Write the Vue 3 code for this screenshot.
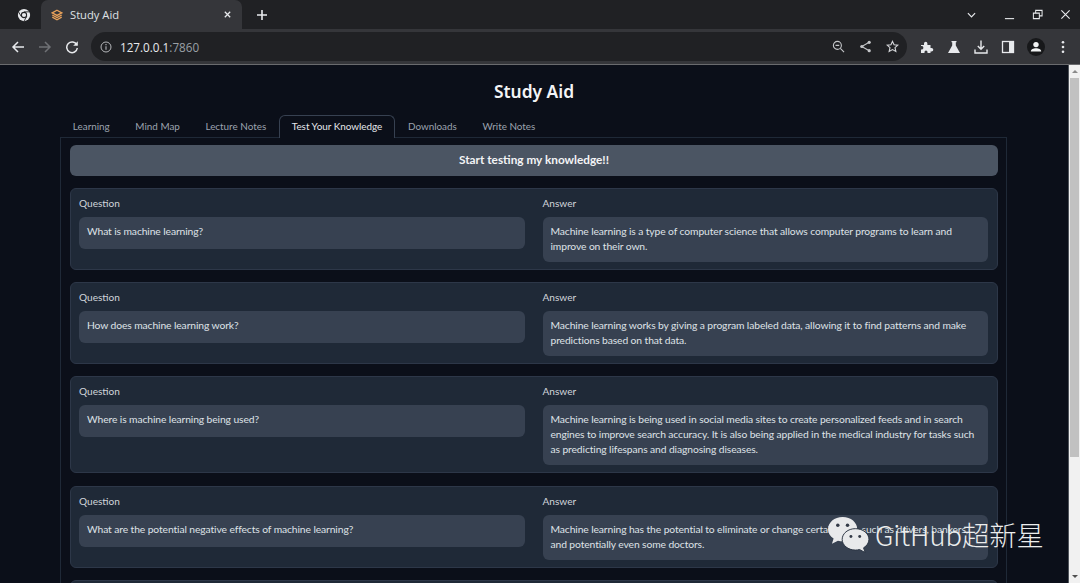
<script setup>
const tabs = ['Learning', 'Mind Map', 'Lecture Notes', 'Test Your Knowledge', 'Downloads', 'Write Notes']
const cards = [
  { q: 'What is machine learning?', a: ['Machine learning is a type of computer science that allows computer programs to learn and', 'improve on their own.'] },
  { q: 'How does machine learning work?', a: ['Machine learning works by giving a program labeled data, allowing it to find patterns and make', 'predictions based on that data.'] },
  { q: 'Where is machine learning being used?', a: ['Machine learning is being used in social media sites to create personalized feeds and in search', 'engines to improve search accuracy. It is also being applied in the medical industry for tasks such', 'as predicting lifespans and diagnosing diseases.'] },
  { q: 'What are the potential negative effects of machine learning?', a: ['Machine learning has the potential to eliminate or change certain jobs, such as drivers, bankers,', 'and potentially even some doctors.'] }
]
</script>

<template>
  <div class="window">
    <header class="tabstrip">
      <svg class="chrome-logo" viewBox="0 0 16 16"><circle cx="8" cy="8" r="7" fill="#e8eaed"/><circle cx="8" cy="8" r="3.6" fill="#202124"/><circle cx="8" cy="8" r="2.4" fill="#e8eaed"/><path d="M8 4.400h6.500M4.900 9.800 1.800 4.400M11.100 9.800 7.900 15.200" stroke="#202124" stroke-width="1"/></svg>
      <div class="tab">
        <svg class="favicon" viewBox="0 0 14 14"><path d="M7 1.500 12.500 4.500 7 7.500 1.500 4.500Z" fill="none" stroke="#e8a15a" stroke-width="1.500"/><path d="M1.500 7 7 10 12.500 7M1.500 9.500 7 12.500 12.500 9.500" fill="none" stroke="#e8a15a" stroke-width="1.500"/></svg>
        <span class="tab-title">Study Aid</span>
        <svg class="tab-close" viewBox="0 0 10 10"><path d="M2 2 8 8M8 2 2 8" stroke="#e8eaed" stroke-width="1.400"/></svg>
      </div>
      <svg class="newtab" viewBox="0 0 12 12"><path d="M6 1v10M1 6h10" stroke="#e8eaed" stroke-width="1.600"/></svg>
      <div class="spacer"></div>
      <svg class="chev" viewBox="0 0 10 6"><path d="M1 1 5 5 9 1" fill="none" stroke="#e8eaed" stroke-width="1.300"/></svg>
      <svg class="win" viewBox="0 0 12 12"><path d="M1 10.500h10" stroke="#e8eaed" stroke-width="1.200"/></svg>
      <svg class="win" viewBox="0 0 12 12"><path d="M1.500 4.500h6.500v6h-6.500zM4 4.500v-3h7v6h-3" fill="none" stroke="#e8eaed" stroke-width="1.100"/></svg>
      <svg class="win last" viewBox="0 0 12 12"><path d="M1.500 1.500 10.500 10.500M10.500 1.500 1.500 10.500" stroke="#e8eaed" stroke-width="1.200"/></svg>
    </header>

    <nav class="toolbar">
      <svg class="nav" viewBox="0 0 14 14"><path d="M13 7H2M7 2 2 7l5 5" fill="none" stroke="#e8eaed" stroke-width="1.500"/></svg>
      <svg class="nav" viewBox="0 0 14 14"><path d="M1 7h11M7 2l5 5-5 5" fill="none" stroke="#6f7175" stroke-width="1.500"/></svg>
      <svg class="nav" viewBox="0 0 14 14"><path d="M11.800 5A5.300 5.300 0 1 0 12.300 8" fill="none" stroke="#e8eaed" stroke-width="1.500"/><path d="M12.800 1.200v4.600H8.200Z" fill="#e8eaed"/></svg>
      <div class="omnibox">
        <svg class="info" viewBox="0 0 12 12"><circle cx="6" cy="6" r="5" fill="none" stroke="#b5b7ba" stroke-width="1"/><path d="M6 5.200v3.600M6 3v1.200" stroke="#b5b7ba" stroke-width="1.100"/></svg>
        <span class="url"><span class="host">127.0.0.1</span><span class="port">:7860</span></span>
        <div class="spacer"></div>
        <svg class="omni-icon" viewBox="0 0 14 14"><circle cx="5.800" cy="5.800" r="4.300" fill="none" stroke="#c4c6c9" stroke-width="1.200"/><path d="M3.800 5.800h4M9 9l4 4" stroke="#c4c6c9" stroke-width="1.200"/></svg>
        <svg class="omni-icon" viewBox="0 0 14 14"><path d="M11 2.500 3 7l8 4.500" fill="none" stroke="#c4c6c9" stroke-width="1.200"/><circle cx="11" cy="2.500" r="1.700" fill="#c4c6c9"/><circle cx="3" cy="7" r="1.700" fill="#c4c6c9"/><circle cx="11" cy="11.500" r="1.700" fill="#c4c6c9"/></svg>
        <svg class="omni-icon" viewBox="0 0 14 14"><path d="m7 1.500 1.700 3.700 4 .4-3 2.700.9 4L7 10.300l-3.600 2 .9-4-3-2.700 4-.4Z" fill="none" stroke="#d5d7da" stroke-width="1.200"/></svg>
      </div>
      <svg class="tool" viewBox="0 0 14 14"><path d="M1 5h3V3.500a1.700 1.700 0 0 1 3.400 0V5h3.100v3h1a1.800 1.800 0 0 1 0 3.600h-1V13H7.500v-1a1.500 1.500 0 0 0-3 0v1H1V9.500h1a1.800 1.800 0 0 0 0-3.500H1Z" fill="#e8eaed"/></svg>
      <svg class="tool" viewBox="0 0 14 14"><path d="M4.500 1h5v1.300H8.800v3.200L13 13H1l4.200-7.500V2.300h-.7Z" fill="#e8eaed"/></svg>
      <svg class="tool" viewBox="0 0 14 14"><path d="M7 .5V9M3.800 6 7 9.200 10.200 6M1 9.500V13h12V9.500" fill="none" stroke="#e8eaed" stroke-width="1.400"/></svg>
      <svg class="tool" viewBox="0 0 14 14"><rect x="1.500" y="1.500" width="11" height="11" fill="none" stroke="#e8eaed" stroke-width="1.300"/><rect x="8" y="1.500" width="4.500" height="11" fill="#e8eaed"/></svg>
      <svg class="avatar" viewBox="0 0 18 18"><circle cx="9" cy="9" r="9" fill="#17181a"/><circle cx="9" cy="6.600" r="2.700" fill="#f1f3f4"/><path d="M3.800 13.500c0-2.200 2.600-3.200 5.200-3.200s5.200 1 5.200 3.200Z" fill="#f1f3f4"/></svg>
      <svg class="dots" viewBox="0 0 4 14"><circle cx="2" cy="2.200" r="1.300" fill="#e8eaed"/><circle cx="2" cy="7" r="1.300" fill="#e8eaed"/><circle cx="2" cy="11.800" r="1.300" fill="#e8eaed"/></svg>
    </nav>

    <div class="viewport">
      <main class="page">
        <h1 class="title">Study Aid</h1>
        <div class="tabs">
          <div v-for="t in tabs" :key="t" class="app-tab" :class="{ active: t === 'Test Your Knowledge' }">{{ t }}</div>
        </div>
        <section class="panel">
          <div class="start">Start testing my knowledge!!</div>
          <div v-for="c in cards" :key="c.q" class="card">
            <div class="col">
              <div class="label">Question</div>
              <div class="box question">{{ c.q }}</div>
            </div>
            <div class="col">
              <div class="label">Answer</div>
              <div class="box"><div v-for="l in c.a" :key="l" class="line">{{ l }}</div></div>
            </div>
          </div>
          <div class="card empty"></div>
        </section>
      </main>
      <aside class="scrollbar">
        <div class="arrow"><span class="up"></span></div>
        <div class="thumb"></div>
        <div class="track"></div>
        <div class="arrow"><span class="down"></span></div>
      </aside>
    </div>

    <div class="watermark">
      <svg class="wechat" viewBox="0 0 44 38">
        <path d="M16 1C7.500 1 1 6.700 1 13.500c0 4 2.200 7.400 5.700 9.700L5 28.500l6.200-3.200c1.600.4 3.200.7 4.800.7 8.500 0 15-5.700 15-12.500S24.500 1 16 1Z" fill="#e8e9eb"/>
        <path d="M29 13c-7.400 0-13.500 4.900-13.500 11S21.600 35 29 35c1.500 0 3-.2 4.300-.6L39 37.500l-1.500-4.800c3.300-2 5.500-5.100 5.500-8.700 0-6.100-6.100-11-14-11Z" fill="#e8e9eb" stroke="#2b3443" stroke-width="1"/>
        <circle cx="11" cy="9.500" r="1.800" fill="#333a47"/><circle cx="21" cy="9.500" r="1.800" fill="#333a47"/>
        <circle cx="24.500" cy="21" r="1.500" fill="#333a47"/><circle cx="33.500" cy="21" r="1.500" fill="#333a47"/>
      </svg>
      <span class="wm-text">GitHub超新星</span>
    </div>
  </div>
</template>

<style>
html, body { margin: 0; background: #0b0f19; overflow: hidden; }
</style>

<style scoped>
.window { position: relative; width: 1080px; height: 583px; overflow: hidden; display: flex; flex-direction: column; font-family: "Lato", "Noto Sans", sans-serif; }
.spacer { flex: 1; }
.tabstrip { height: 29px; background: #202124; display: flex; align-items: center; flex: none; }
.chrome-logo { width: 14px; height: 14px; margin: 0 10px 0 17px; }
.tab { width: 201px; height: 29px; box-sizing: border-box; background: #35363a; border-radius: 7px 7px 0 0; display: flex; align-items: center; padding: 0 10px; }
.favicon { width: 12px; height: 12px; margin-right: 7px; }
.tab-title { flex: 1; font: 11.200px "Open Sans", sans-serif; color: #dfe1e5; }
.tab-close { width: 9px; height: 9px; }
.newtab { width: 12px; height: 12px; margin-left: 14px; }
.chev { width: 9px; height: 6px; margin-right: 28px; }
.win { width: 11px; height: 11px; margin-right: 17px; }
.win.last { margin-right: 9px; }
.toolbar { height: 35px; background: #35363a; border-bottom: 1px solid #6a6b6e; display: flex; align-items: center; flex: none; padding-left: 11px; }
.nav { width: 14px; height: 14px; margin-right: 13px; }
.omnibox { width: 816px; height: 29px; margin-left: -1px; border-radius: 15px; background: #202124; display: flex; align-items: center; padding: 0 8px 0 9px; box-sizing: border-box; }
.info { width: 12px; height: 12px; margin-right: 8px; }
.url { font: 11.700px "Open Sans", sans-serif; }
.host { color: #e8eaed; }
.port { color: #9aa0a6; }
.omni-icon { width: 13px; height: 13px; margin-left: 14px; }
.tool { width: 14px; height: 14px; margin-left: 13px; flex: none; }
.avatar { width: 18px; height: 18px; margin-left: 12px; flex: none; }
.dots { width: 4px; height: 14px; margin-left: 16px; flex: none; }
.viewport { flex: 1; display: flex; min-height: 0; overflow: hidden; }
.page { flex: 1; min-width: 0; background: #0b0f19; padding-top: 14px; border-right: 1px solid #50555c; }
.title { margin: 0; text-align: center; color: #f3f4f6; font: 600 17.400px/24px "Noto Sans", sans-serif; }
.tabs { width: 947px; margin: 12px 0 0 60px; height: 23px; display: flex; position: relative; z-index: 1; }
.app-tab { padding: 0 11.800px; height: 23px; line-height: 21px; font-size: 9.900px; color: #9ca3af; box-sizing: border-box; border: 1px solid transparent; border-bottom: 0; }
.app-tab.active { color: #e5e7eb; border-color: #374151; border-radius: 6px 6px 0 0; background: #0b0f19; }
.panel { width: 947px; margin: -1px 0 0 60px; box-sizing: border-box; border: 1px solid #1f2937; padding: 7px 8px 7px 9px; display: flex; flex-direction: column; gap: 12.150px; }
.start { height: 31px; line-height: 30px; background: #4b5563; border-radius: 6px; text-align: center; font-size: 11.800px; font-weight: 700; color: #f3f4f6; }
.card { background: #1f2937; border: 1px solid #2d3748; border-radius: 6px; display: grid; grid-template-columns: minmax(0, 1fr) minmax(0, 1fr); gap: 18px; padding: 8px 9px 7px 8px; }
.empty { height: 60px; }
.label { height: 20px; line-height: 12px; font-size: 10.100px; color: #d1d5db; }
.box { background: #374151; border-radius: 6px; padding: 7px 7px 8px 8px; font-size: 10.300px; letter-spacing: -.1px; line-height: 15px; color: #dfe2e7; }
.question { min-height: 15px; padding-bottom: 10px; }
.line { white-space: nowrap; }
.scrollbar { width: 11px; background: #f1f1f1; display: flex; flex-direction: column; flex: none; padding: 0 1px 0 1px; box-sizing: border-box; }
.arrow { height: 13px; display: flex; align-items: center; justify-content: center; flex: none; }
.thumb { height: 379px; background: #c1c1c1; flex: none; }
.track { flex: 1; }
.up { border: 3px solid transparent; border-bottom: 3px solid #8a8a8a; border-top: 0; }
.down { border: 3px solid transparent; border-top: 3px solid #505050; border-bottom: 0; }
.watermark { position: absolute; left: 827px; top: 516px; display: flex; align-items: center; }
.wechat { width: 43px; height: 37px; margin-right: 5px; }
.wm-text { font: 300 27.300px/34px "Noto Sans CJK SC", "Noto Sans", sans-serif; color: #eceded; white-space: nowrap; margin-top: -2px; }
</style>
